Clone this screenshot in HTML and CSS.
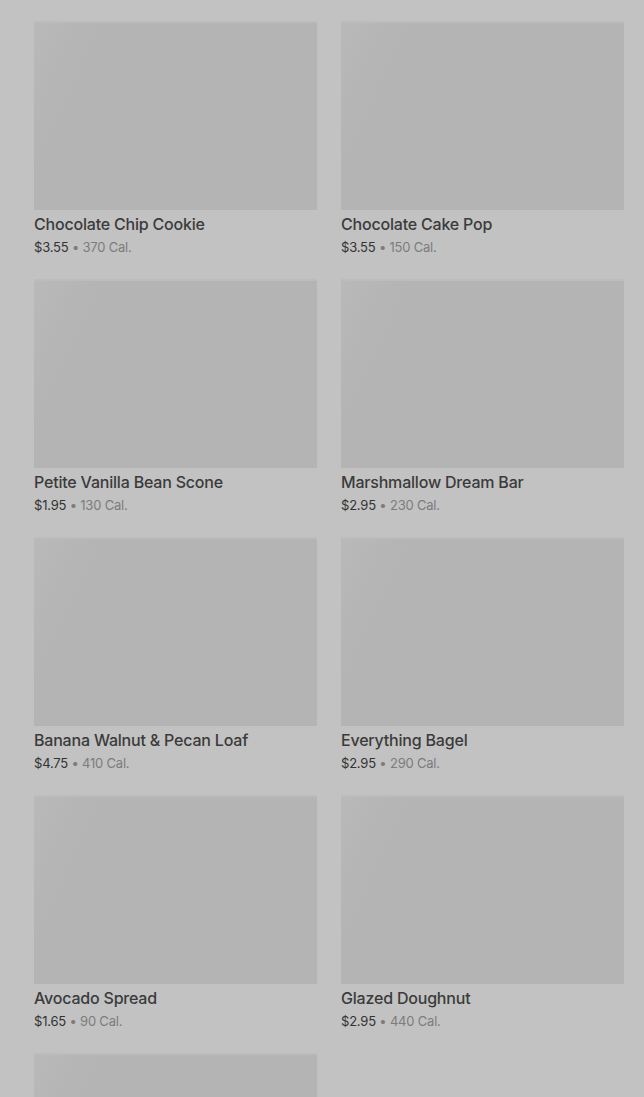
FILE: index.html
```html
<!DOCTYPE html>
<html lang="en">
<head>
<meta charset="utf-8">
<title>Menu</title>
<link rel="stylesheet" href="styles.css">
</head>
<body>
<main class="page">
  <ul class="grid">
    <li class="item"><div class="thumb"></div><h3 class="name">Chocolate Chip Cookie</h3><p class="meta"><span class="price">$3.55</span><span class="cal"> • 370 Cal.</span></p></li>
    <li class="item"><div class="thumb"></div><h3 class="name">Chocolate Cake Pop</h3><p class="meta"><span class="price">$3.55</span><span class="cal"> • 150 Cal.</span></p></li>
    <li class="item"><div class="thumb"></div><h3 class="name">Petite Vanilla Bean Scone</h3><p class="meta"><span class="price">$1.95</span><span class="cal"> • 130 Cal.</span></p></li>
    <li class="item"><div class="thumb"></div><h3 class="name">Marshmallow Dream Bar</h3><p class="meta"><span class="price">$2.95</span><span class="cal"> • 230 Cal.</span></p></li>
    <li class="item"><div class="thumb"></div><h3 class="name">Banana Walnut &amp; Pecan Loaf</h3><p class="meta"><span class="price">$4.75</span><span class="cal"> • 410 Cal.</span></p></li>
    <li class="item"><div class="thumb"></div><h3 class="name">Everything Bagel</h3><p class="meta"><span class="price">$2.95</span><span class="cal"> • 290 Cal.</span></p></li>
    <li class="item"><div class="thumb"></div><h3 class="name">Avocado Spread</h3><p class="meta"><span class="price">$1.65</span><span class="cal"> • 90 Cal.</span></p></li>
    <li class="item"><div class="thumb"></div><h3 class="name">Glazed Doughnut</h3><p class="meta"><span class="price">$2.95</span><span class="cal"> • 440 Cal.</span></p></li>
    <li class="item"><div class="thumb"></div></li>
  </ul>
</main>
</body>
</html>
```
FILE: styles.css
```css
html, body {
  margin: 0;
  padding: 0;
  background: #c2c2c2;
  height: 100%;
  overflow: hidden;
}
body {
  font-family: Inter, "Noto Sans", "Liberation Sans", sans-serif;
  color: #333;
}
.page {
  padding: 0 20px 0 34px;
}
.grid {
  list-style: none;
  margin: 23px 0 0 0;
  padding: 0;
  display: grid;
  grid-template-columns: 283px 283px;
  column-gap: 24px;
  row-gap: 23px;
}
.item {
  display: flex;
  flex-direction: column;
  height: 235px;
}
.thumb {
  height: 187px;
  background: linear-gradient(115deg, #b9b9b9 0%, #b4b4b4 18%, #b4b4b4 100%);
  box-shadow: 0 -2px 0 #bcbcbc;
}
.name {
  margin: 3px 0 0;
  font-size: 16px;
  font-weight: 500;
  line-height: 22px;
  color: #3b3b3b;
  letter-spacing: -0.2px;
}
.meta {
  margin: 3px 0 0;
  font-size: 13px;
  line-height: 18px;
  letter-spacing: -0.2px;
}
.price {
  color: #333;
}
.cal {
  color: #7c7c7c;
}
```
